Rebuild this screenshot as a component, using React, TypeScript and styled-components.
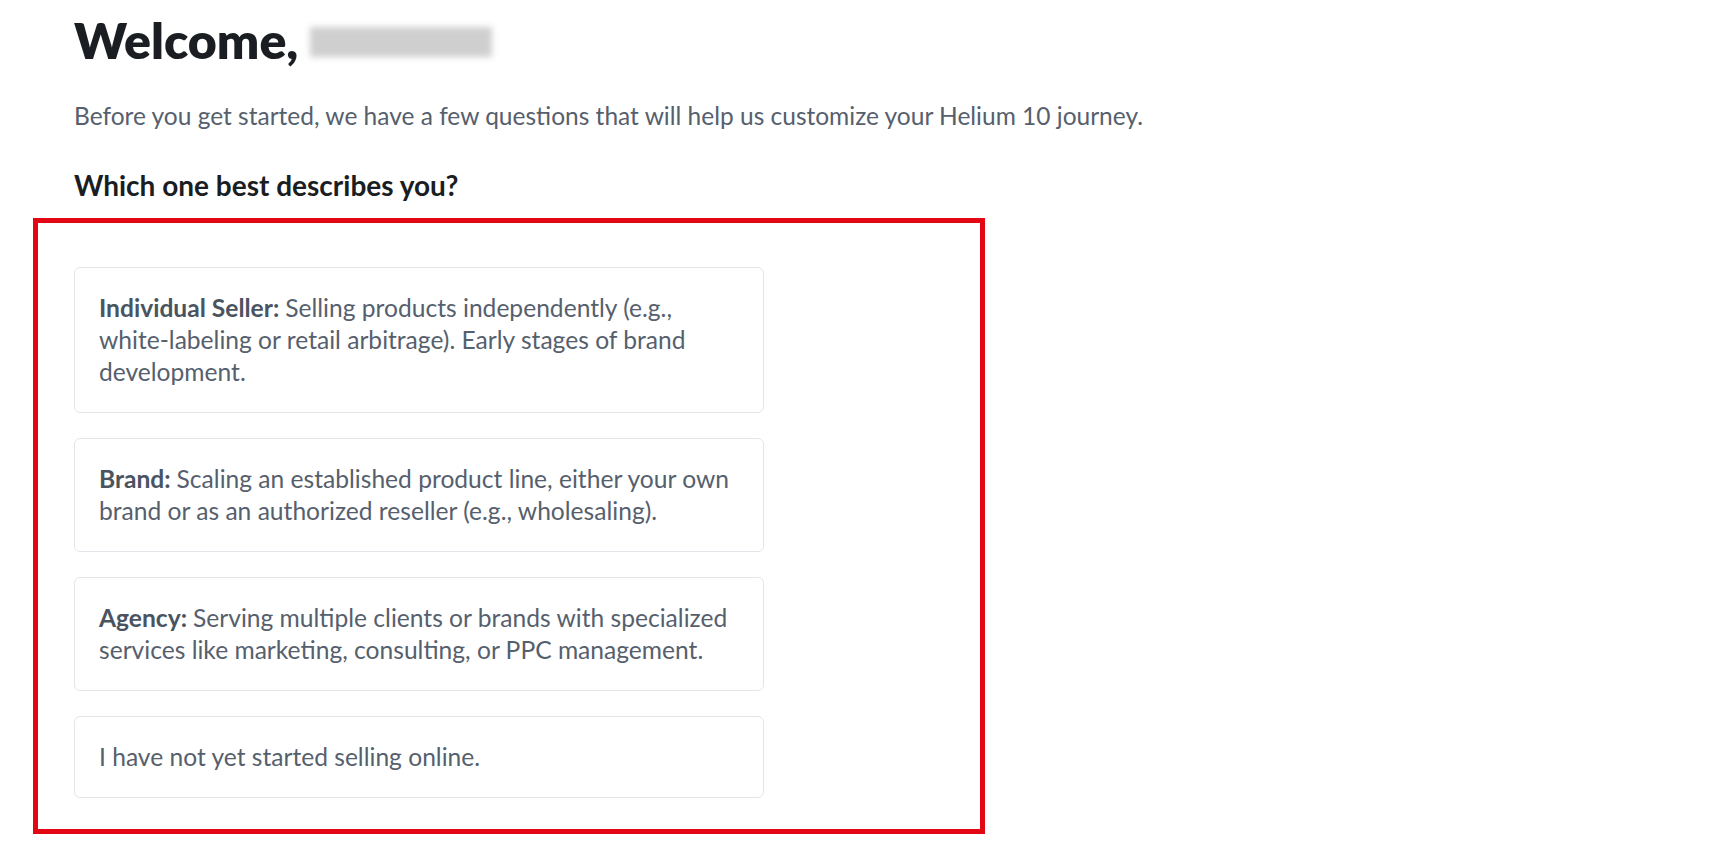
import React from 'react';
import styled, { createGlobalStyle } from 'styled-components';

const GlobalStyle = createGlobalStyle`
  html, body {
    margin: 0;
    padding: 0;
    background: #ffffff;
  }
  body {
    font-family: Lato, "Open Sans", "Liberation Sans", sans-serif;
    -webkit-font-smoothing: antialiased;
  }
`;

const Page = styled.main`
  display: flex;
  flex-direction: column;
  padding: 8px 0 0 74px;
`;

const Heading = styled.h1`
  display: flex;
  align-items: center;
  gap: 12px;
  margin: 0;
  font-size: 50px;
  line-height: 64px;
  font-weight: 800;
  color: #1a1d21;
`;

const BlurredName = styled.span`
  display: inline-block;
  width: 182px;
  height: 30px;
  margin-top: 4px;
  background: #cfcfcf;
  filter: blur(3px);
`;

const Intro = styled.p`
  margin: 28px 0 0;
  font-size: 24.5px;
  line-height: 32px;
  color: #56606d;
`;

const Question = styled.h2`
  margin: 35px 0 0;
  font-size: 28px;
  line-height: 36px;
  font-weight: 700;
  color: #1a1d21;
`;

const Highlight = styled.section`
  display: flex;
  flex-direction: column;
  gap: 25px;
  width: 952px;
  margin: 15px 0 20px -41px;
  padding: 44px 0 31px 36px;
  border: 5px solid #e30613;
  box-sizing: border-box;
`;

const OptionCard = styled.button`
  display: block;
  width: 690px;
  padding: 24px 20px 24px 24px;
  text-align: left;
  background: #ffffff;
  border: 1px solid #e2e5e9;
  border-radius: 6px;
  font-family: inherit;
  font-size: 24.6px;
  line-height: 32px;
  color: #56606d;
  cursor: pointer;
  box-sizing: border-box;
`;

const Label = styled.strong`
  font-weight: 700;
  color: #4a5461;
`;

const options = [
  {
    label: 'Individual Seller: ',
    text: 'Selling products independently (e.g., white-labeling or retail arbitrage). Early stages of brand development.',
  },
  {
    label: 'Brand: ',
    text: 'Scaling an established product line, either your own brand or as an authorized reseller (e.g., wholesaling).',
  },
  {
    label: 'Agency: ',
    text: 'Serving multiple clients or brands with specialized services like marketing, consulting, or PPC management.',
  },
  { label: '', text: 'I have not yet started selling online.' },
];

const App: React.FC = () => (
  <>
    <GlobalStyle />
    <Page>
      <Heading>
        Welcome, <BlurredName />
      </Heading>
      <Intro>
        Before you get started, we have a few questions that will help us customize your Helium 10 journey.
      </Intro>
      <Question>Which one best describes you?</Question>
      <Highlight>
        {options.map((o) => (
          <OptionCard key={o.text}>
            {o.label && <Label>{o.label}</Label>}
            {o.text}
          </OptionCard>
        ))}
      </Highlight>
    </Page>
  </>
);

export default App;
